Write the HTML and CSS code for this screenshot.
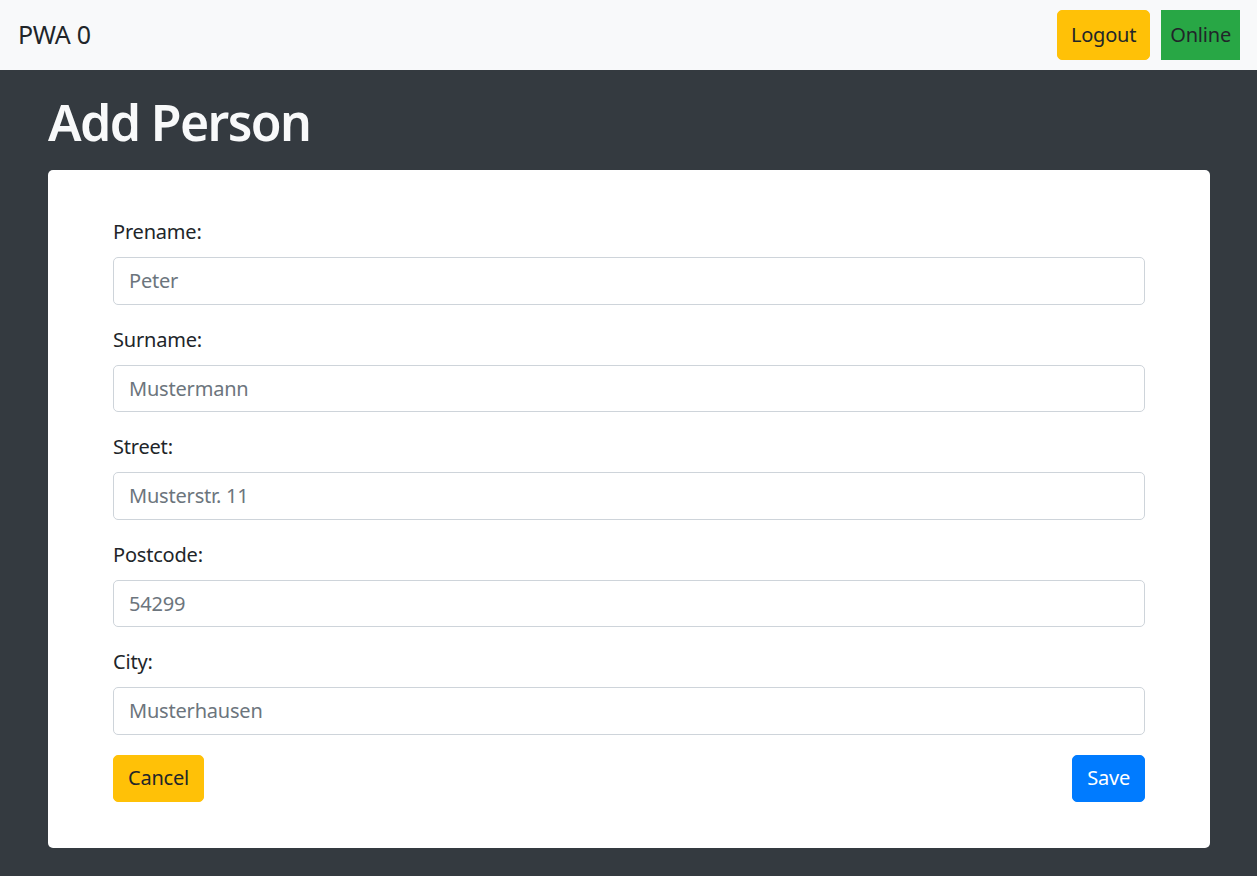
FILE: index.html
```html
<!DOCTYPE html>
<html lang="en">
<head>
<meta charset="utf-8">
<title>PWA 0</title>
<link rel="stylesheet" href="styles.css">
</head>
<body>
<nav class="navbar">
  <span class="brand">PWA 0</span>
  <div class="nav-actions">
    <button class="btn btn-warning btn-nav" type="button">Logout</button>
    <span class="status">Online</span>
  </div>
</nav>
<main class="container">
  <h1 class="title">Add Person</h1>
  <section class="card">
    <form class="form">
      <div class="form-group">
        <label class="label" for="prename">Prename:</label>
        <input class="input" id="prename" type="text" placeholder="Peter">
      </div>
      <div class="form-group">
        <label class="label" for="surname">Surname:</label>
        <input class="input" id="surname" type="text" placeholder="Mustermann">
      </div>
      <div class="form-group">
        <label class="label" for="street">Street:</label>
        <input class="input" id="street" type="text" placeholder="Musterstr. 11">
      </div>
      <div class="form-group">
        <label class="label" for="postcode">Postcode:</label>
        <input class="input" id="postcode" type="text" placeholder="54299">
      </div>
      <div class="form-group">
        <label class="label" for="city">City:</label>
        <input class="input" id="city" type="text" placeholder="Musterhausen">
      </div>
      <div class="form-actions">
        <button class="btn btn-warning" type="button">Cancel</button>
        <button class="btn btn-primary" type="submit">Save</button>
      </div>
    </form>
  </section>
</main>
</body>
</html>
```

FILE: styles.css
```css
* { box-sizing: border-box; }
html, body { height: 100%; }
body {
  margin: 0;
  background: #343a40;
  color: #212529;
  font-family: "Noto Sans", "Open Sans", sans-serif;
  font-size: 20px;
  line-height: 1.5;
}
.navbar {
  display: flex;
  justify-content: space-between;
  align-items: center;
  height: 70px;
  padding: 0 17px 0 18px;
  background: #f8f9fa;
}
.brand {
  font-size: 25px;
  color: #212529;
  letter-spacing: -0.3px;
}
.nav-actions {
  display: flex;
  align-items: stretch;
  gap: 11px;
}
.btn {
  font: inherit;
  font-size: 20px;
  line-height: 30px;
  border: 1px solid transparent;
  border-radius: 5px;
  padding: 0 14px;
  height: 47.5px;
  color: #212529;
  letter-spacing: -0.2px;
  cursor: pointer;
}
.btn-nav {
  height: 49.5px;
  padding: 0 13px;
}
.btn-warning { background: #ffc107; border-color: #ffc107; }
.btn-primary { background: #007bff; border-color: #007bff; color: #fff; }
.status {
  display: flex;
  align-items: center;
  background: #28a745;
  padding: 0 9px;
  font-size: 20px;
  letter-spacing: -0.2px;
  color: #212529;
}
.container {
  padding: 22px 47px 0 48px;
}
.title {
  margin: 0 0 18px;
  font-size: 50px;
  font-weight: 600;
  line-height: 60px;
  letter-spacing: -1.6px;
  color: #f8f9fa;
}
.card {
  background: #fff;
  border-radius: 5px;
  padding: 47px 65px 46px;
}
.form-group { margin-bottom: 20px; }
.label {
  display: block;
  margin-bottom: 10px;
  line-height: 30px;
  letter-spacing: -0.2px;
}
.input {
  display: block;
  width: 100%;
  height: 47.5px;
  padding: 7px 15px;
  font: inherit;
  font-size: 20px;
  letter-spacing: -0.2px;
  color: #495057;
  border: 1px solid #ced4da;
  border-radius: 5px;
  background: #fff;
}
.input::placeholder { color: #6c757d; }
.form-actions {
  display: flex;
  justify-content: space-between;
}
```
